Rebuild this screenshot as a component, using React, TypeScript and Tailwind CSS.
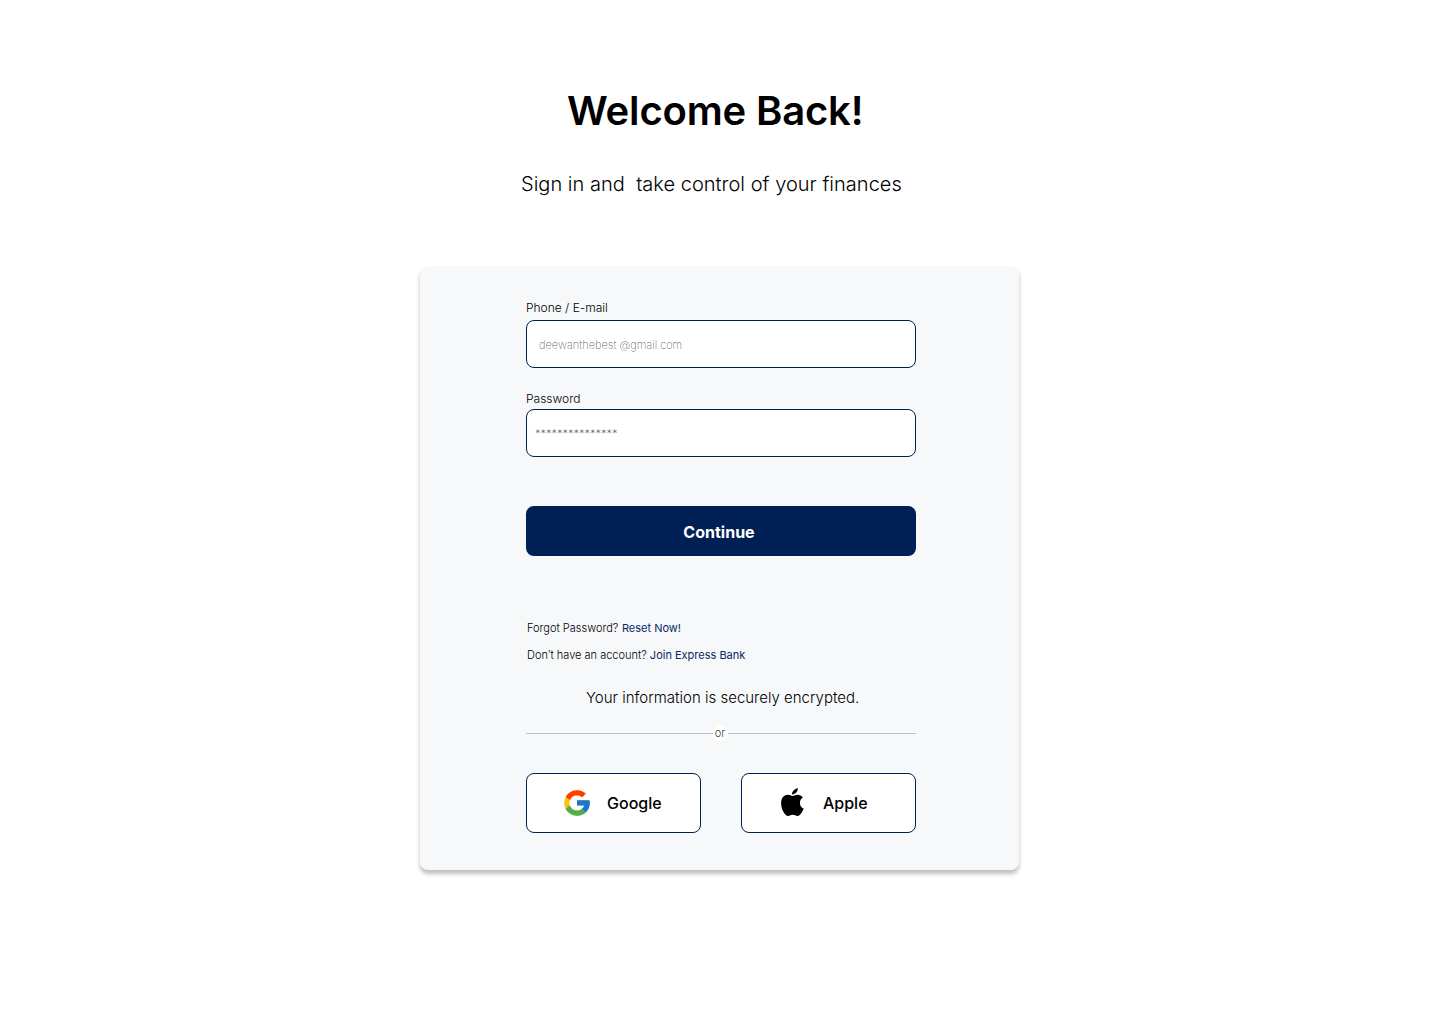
import React from "react";

function GoogleLogo() {
  return (
    <svg className="block h-[26px] w-[26px] shrink-0" viewBox="3.6 3.8 40.6 40.6" aria-hidden="true">
      <path fill="#FFC107" d="M43.611 20.083H42V20H24v8h11.303c-1.649 4.657-6.08 8-11.303 8-6.627 0-12-5.373-12-12s5.373-12 12-12c3.059 0 5.842 1.154 7.961 3.039l5.657-5.657C34.046 6.053 29.268 4 24 4 12.955 4 4 12.955 4 24s8.955 20 20 20 20-8.955 20-20c0-1.341-.138-2.65-.389-3.917z" />
      <path fill="#FF3D00" d="M6.306 14.691l6.571 4.819C14.655 15.108 18.961 12 24 12c3.059 0 5.842 1.154 7.961 3.039l5.657-5.657C34.046 6.053 29.268 4 24 4 16.318 4 9.656 8.337 6.306 14.691z" />
      <path fill="#4CAF50" d="M24 44c5.166 0 9.86-1.977 13.409-5.192l-6.19-5.238C29.211 35.091 26.715 36 24 36c-5.202 0-9.619-3.317-11.283-7.946l-6.522 5.025C9.505 39.556 16.227 44 24 44z" />
      <path fill="#1976D2" d="M43.611 20.083H42V20H24v8h11.303c-.792 2.237-2.231 4.166-4.087 5.571l6.193 5.238C36.971 39.205 44 34 44 24c0-1.341-.138-2.65-.389-3.917z" />
    </svg>
  );
}

function AppleLogo() {
  return (
    <svg className="mb-[2px] block h-[28px] w-[23px] shrink-0" viewBox="8 0 814 1000" aria-hidden="true">
      <path d="M788.1 340.9c-5.8 4.5-108.2 62.2-108.2 190.5 0 148.4 130.3 200.9 134.2 202.2-.6 3.2-20.7 71.9-68.7 141.9-42.8 61.6-87.5 123.1-155.5 123.1s-85.5-39.5-164-39.5c-76.5 0-103.7 40.8-165.9 40.8s-105.6-57-155.5-127C46.7 790.7 8 663 8 541.8c0-194.4 118.4-297.5 242.8-297.5 66.1 0 121.2 43.4 162.7 43.4 39.5 0 101.1-46 176.3-46 28.5 0 130.9 2.6 198.3 99.2z" />
      <path d="M393 235C393 140 480 30 602 0c14 95-60 222-209 235z" />
    </svg>
  );
}

export default function App() {
  return (
    <main className="flex h-[1024px] w-[1440px] flex-col bg-white font-['Inter',sans-serif] text-black">
      <h1 className="mt-[86px] ml-[567px] h-[50px] text-[40px] leading-[50px] font-semibold tracking-[-0.17px] whitespace-nowrap">Welcome Back!</h1>
      <p className="mt-[36px] ml-[521px] h-[24px] text-[20px] leading-[24px] font-light tracking-[0.025px] whitespace-pre">Sign in and  take control of your finances</p>
      <section className="mt-[70px] ml-[420px] flex h-[604px] w-[599px] flex-col rounded-lg bg-[#f6f8fa] pr-[103px] pl-[106px] shadow-[0_4px_4px_rgba(0,0,0,0.25)]">
        <label className="mt-[34px] h-[16px] text-[12px] leading-[16px] font-light">Phone / E-mail</label>
        <div className="mt-[4px] flex h-[48px] items-center rounded-lg border border-[#001f54] bg-white pt-[2px] pl-3 text-[11px] font-extralight text-black/65">deewanthebest @gmail.com</div>
        <label className="mt-[23px] h-[16px] text-[12px] leading-[16px] font-light">Password</label>
        <div className="mt-[2px] flex h-[48px] items-center rounded-lg border border-[#001f54] bg-white pt-[3px] pl-2 text-[11px] font-extralight text-black/75">***************</div>
        <button className="mt-[49px] h-[50px] rounded-lg bg-[#001f54] pt-[2px] pr-[4px] text-[16px] leading-[20px] font-bold text-white">Continue</button>
        <p className="mt-[64px] ml-px h-[16px] text-[11px] leading-[16px] font-light whitespace-nowrap">
          Forgot Password? <a className="ml-[0.5px] font-normal text-[#0a2a63]">Reset Now!</a>
        </p>
        <p className="mt-[11px] ml-px h-[16px] text-[11px] leading-[16px] font-light whitespace-nowrap">
          Don’t have an account? <a className="font-normal text-[#0a2a63]">Join Express Bank</a>
        </p>
        <p className="mt-[25px] ml-[60px] h-[20px] text-[15px] leading-[20px] font-light whitespace-nowrap">Your information is securely encrypted.</p>
        <div className="mt-[18px] flex h-[15px] items-center">
          <span className="h-px w-[187px] bg-[#b8c2cf]" />
          <span className="flex h-[15px] w-[15px] items-center justify-center rounded-full bg-white pr-px text-[11px] leading-[15px] font-light text-black/80">or</span>
          <span className="h-px flex-1 bg-[#b8c2cf]" />
        </div>
        <div className="mt-[32px] flex justify-between">
          <button className="flex h-[60px] w-[175px] items-center rounded-lg border border-[#001f54] bg-white pl-[37px] text-[16px] font-medium">
            <GoogleLogo />
            <span className="ml-[17px]">Google</span>
          </button>
          <button className="flex h-[60px] w-[175px] items-center rounded-lg border border-[#001f54] bg-white pl-[39.4px] text-[16px] font-medium">
            <AppleLogo />
            <span className="ml-[18.6px]">Apple</span>
          </button>
        </div>
      </section>
    </main>
  );
}
